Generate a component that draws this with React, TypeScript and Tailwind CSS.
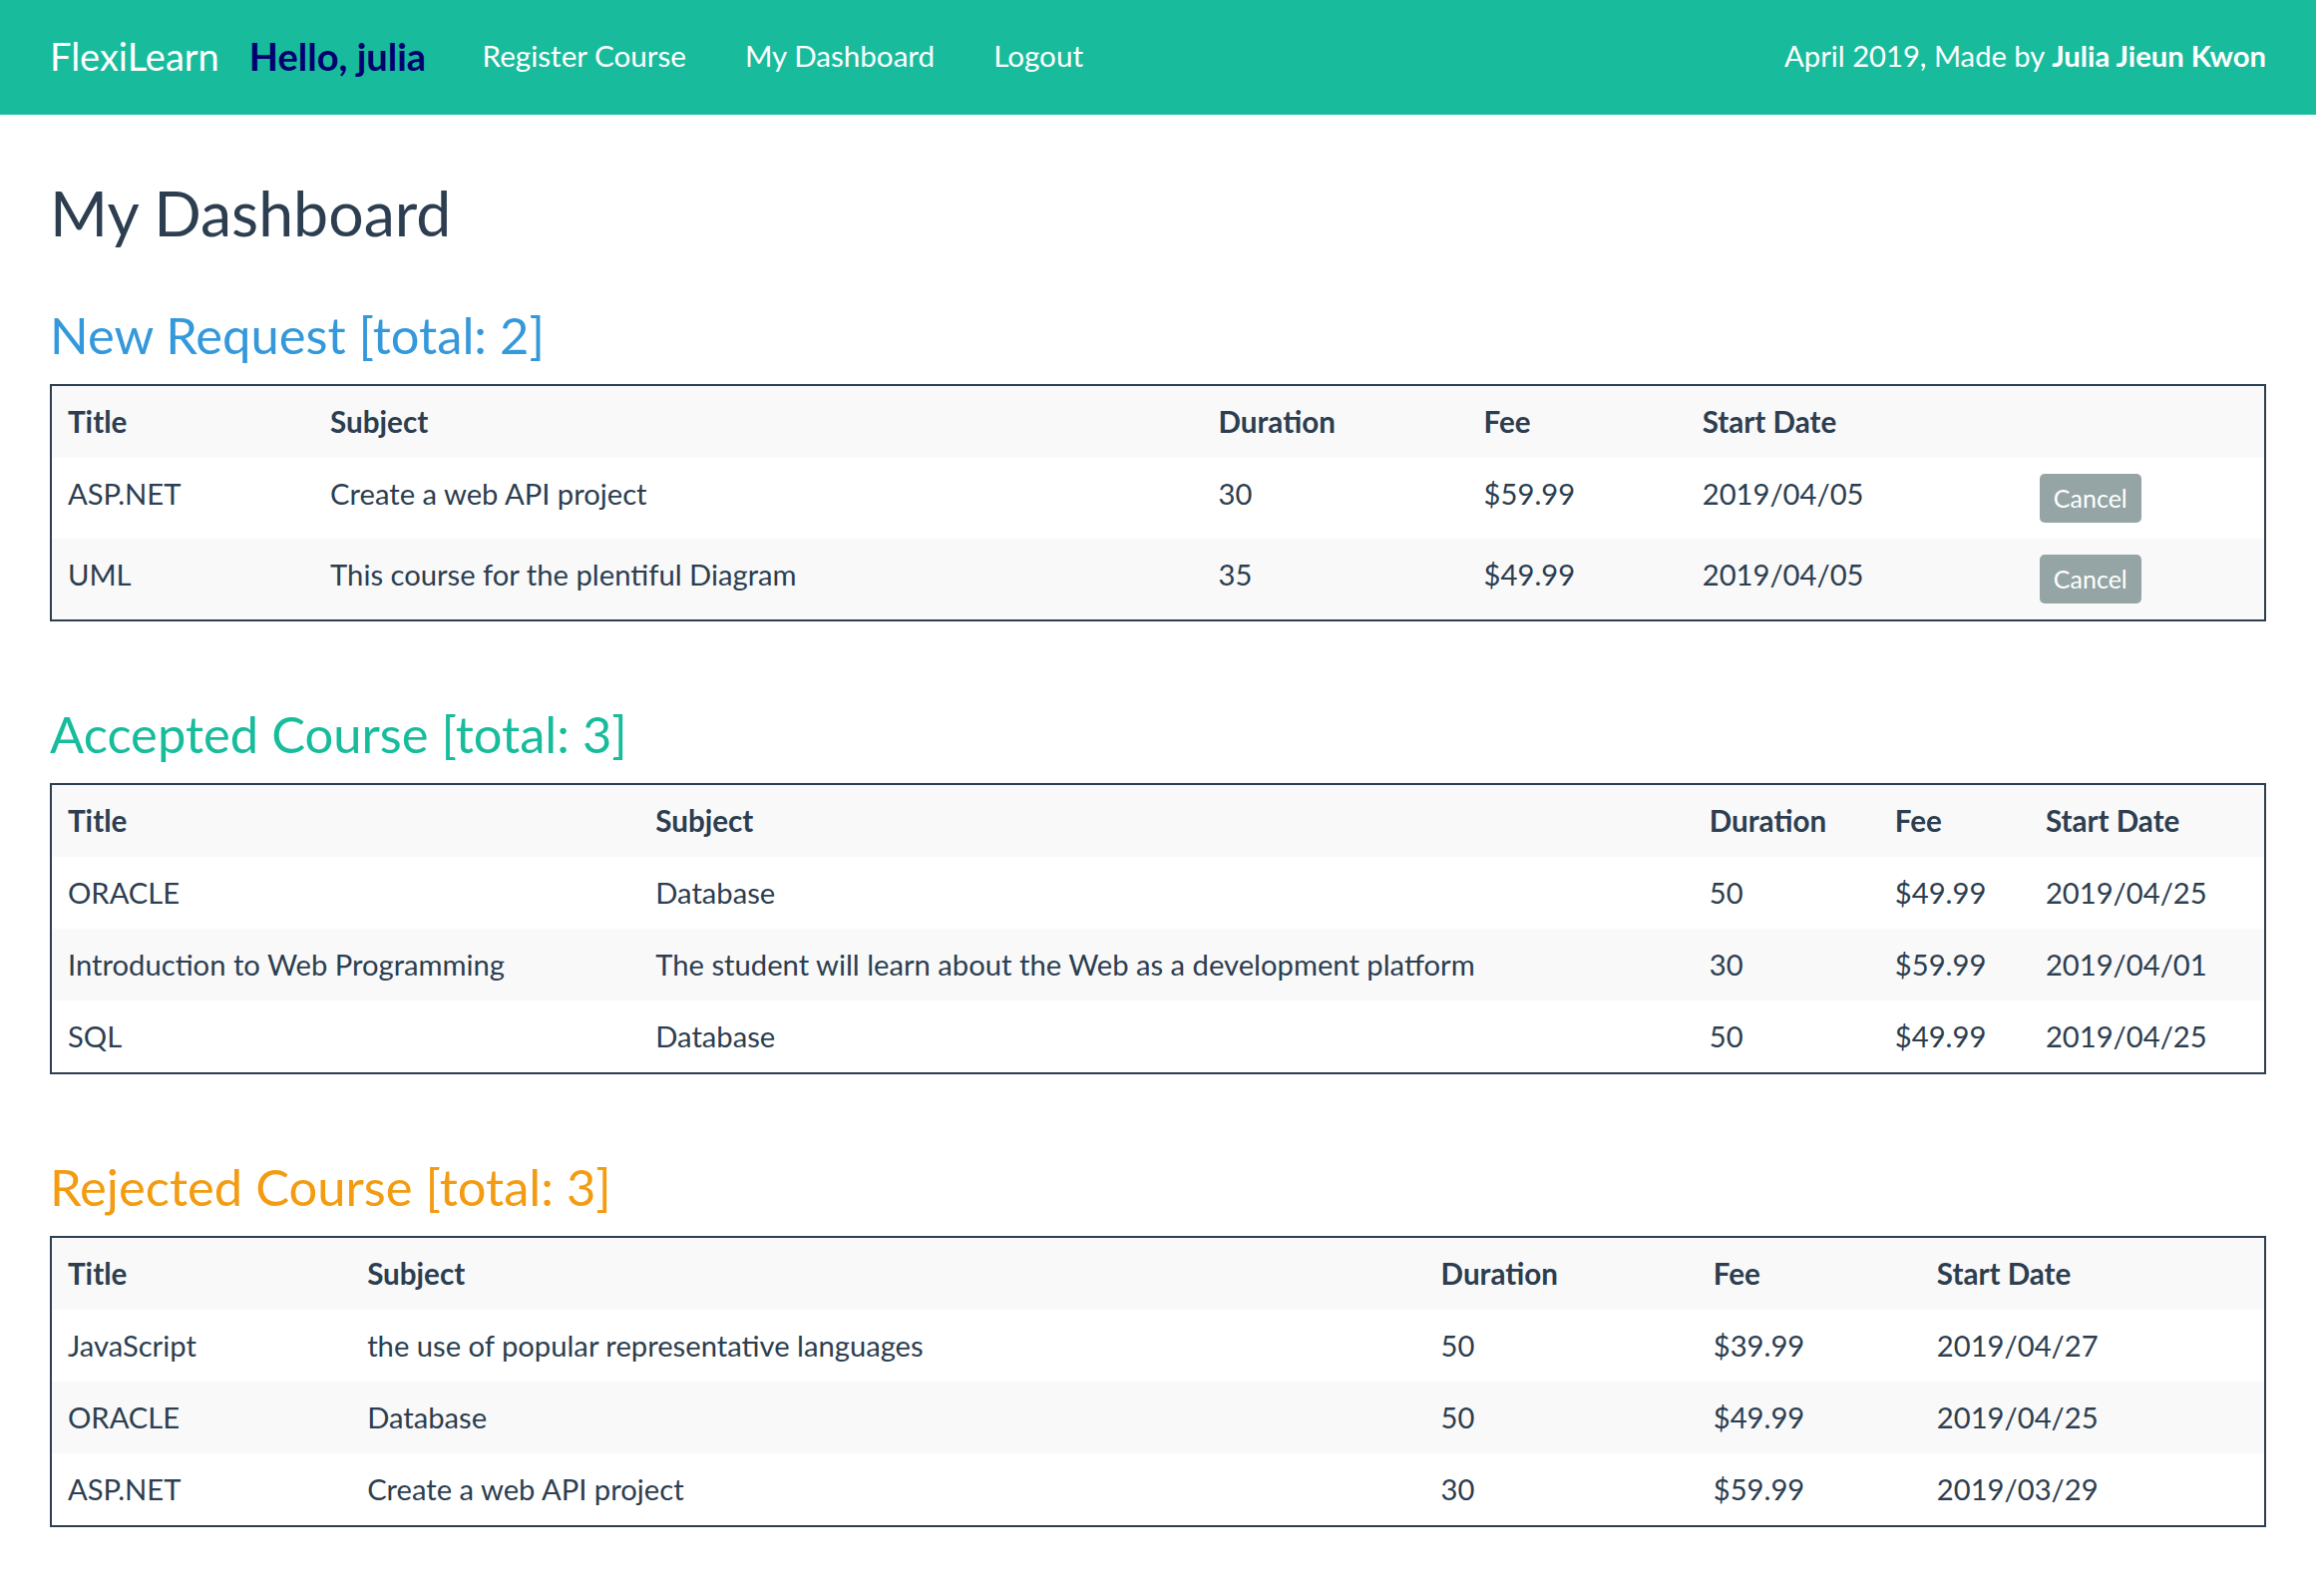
import React from "react";

type Row = { title: string; subject: string; duration: number; fee: string; start: string };

const newRequests: Row[] = [
  { title: "ASP.NET", subject: "Create a web API project", duration: 30, fee: "$59.99", start: "2019/04/05" },
  { title: "UML", subject: "This course for the plentiful Diagram", duration: 35, fee: "$49.99", start: "2019/04/05" },
];

const accepted: Row[] = [
  { title: "ORACLE", subject: "Database", duration: 50, fee: "$49.99", start: "2019/04/25" },
  { title: "Introduction to Web Programming", subject: "The student will learn about the Web as a development platform", duration: 30, fee: "$59.99", start: "2019/04/01" },
  { title: "SQL", subject: "Database", duration: 50, fee: "$49.99", start: "2019/04/25" },
];

const rejected: Row[] = [
  { title: "JavaScript", subject: "the use of popular representative languages", duration: 50, fee: "$39.99", start: "2019/04/27" },
  { title: "ORACLE", subject: "Database", duration: 50, fee: "$49.99", start: "2019/04/25" },
  { title: "ASP.NET", subject: "Create a web API project", duration: 30, fee: "$59.99", start: "2019/03/29" },
];

function CourseTable({
  rows,
  widths,
  cancel,
}: {
  rows: Row[];
  widths: string[];
  cancel?: boolean;
}) {
  const heads = ["Title", "Subject", "Duration", "Fee", "Start Date"];
  return (
    <table className="mt-[21px] w-full table-fixed border-collapse border-2 border-[#2c3e50] text-left">
      <thead>
        <tr className="bg-[#f9f9f9]">
          {heads.map((h, i) => (
            <th key={h} className={`${widths[i]} px-[16px] py-[16px] align-top text-[29.6px] font-bold`}>
              {h}
            </th>
          ))}
          {cancel && <th className={`${widths[5]} px-[16px] py-[16px]`}></th>}
        </tr>
      </thead>
      <tbody>
        {rows.map((r, idx) => (
          <tr key={idx} className={idx % 2 === 1 ? "bg-[#f9f9f9]" : "bg-white"}>
            <td className="px-[16px] py-[16px] align-top">{r.title}</td>
            <td className="px-[16px] py-[16px] align-top">{r.subject}</td>
            <td className="px-[16px] py-[16px] align-top">{r.duration}</td>
            <td className="px-[16px] py-[16px] align-top">{r.fee}</td>
            <td className="px-[16px] py-[16px] align-top">{r.start}</td>
            {cancel && (
              <td className="px-[16px] py-[16px] align-top">
                <button className="h-[49px] rounded-[5px] bg-[#95a5a6] px-[14px] text-[25px] leading-[49px] text-white">
                  Cancel
                </button>
              </td>
            )}
          </tr>
        ))}
      </tbody>
    </table>
  );
}

export default function App() {
  return (
    <div className="min-h-screen bg-white font-['Lato',sans-serif] text-[29.2px] leading-[40px] text-[#2c3e50]">
      <nav className="flex h-[115px] items-center justify-between bg-[#18bc9c] px-[50px] pb-[3px] text-white">
        <div className="flex items-center">
          <span className="text-[38px]">FlexiLearn</span>
          <span className="ml-[30px] text-[38px] font-bold text-[#000070]">Hello, julia</span>
          <ul className="ml-[27px] flex text-[29.6px]">
            <li className="px-[29.5px]">Register Course</li>
            <li className="px-[29.5px]">My Dashboard</li>
            <li className="px-[29.5px]">Logout</li>
          </ul>
        </div>
        <div>
          April 2019, Made by <span className="font-bold">Julia Jieun Kwon</span>
        </div>
      </nav>

      <main className="px-[50px] pb-[60px]">
        <h1 className="mt-[63px] text-[62.6px] leading-[70px]">My Dashboard</h1>

        <section>
          <h2 className="mt-[59px] text-[50.7px] leading-[57px] text-[#3498db]">New Request [total: 2]</h2>
          <CourseTable
            rows={newRequests}
            cancel
            widths={["w-[264px]", "w-[890px]", "w-[266px]", "w-[219px]", "w-[338px]", "w-[242px]"]}
          />
        </section>

        <section>
          <h2 className="mt-[84px] text-[50.7px] leading-[57px] text-[#18bc9c]">Accepted Course [total: 3]</h2>
          <CourseTable
            rows={accepted}
            widths={["w-[590px]", "w-[1056px]", "w-[186px]", "w-[151px]", "w-[236px]"]}
          />
        </section>

        <section>
          <h2 className="mt-[84px] text-[50.7px] leading-[57px] text-[#f39c12]">Rejected Course [total: 3]</h2>
          <CourseTable
            rows={rejected}
            widths={["w-[301px]", "w-[1076px]", "w-[273px]", "w-[224px]", "w-[345px]"]}
          />
        </section>
      </main>
    </div>
  );
}
